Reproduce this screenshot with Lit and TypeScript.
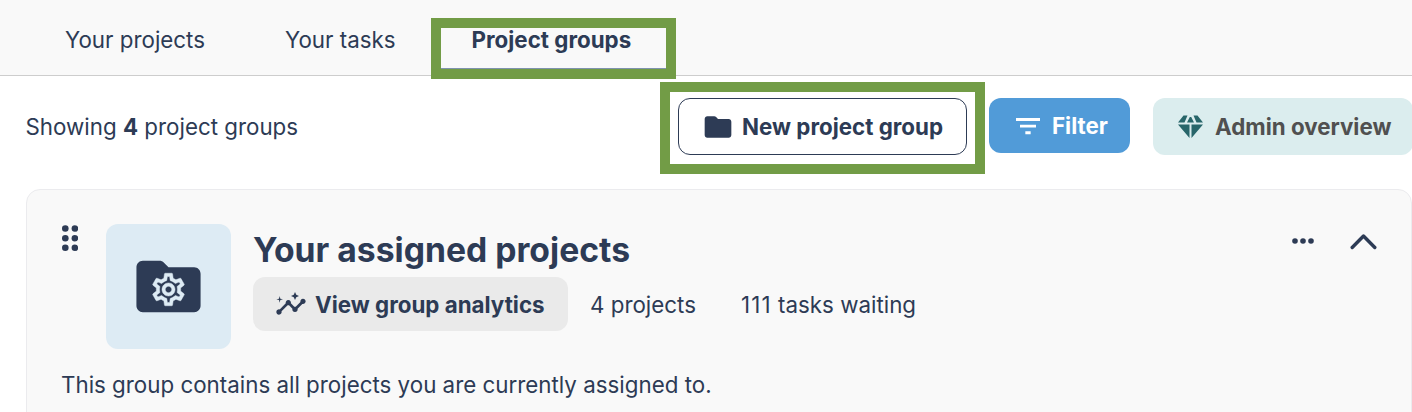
import { LitElement, html, css } from "lit";
import { customElement } from "lit/decorators.js";

const folder =
  "M10.59 4.59C10.21 4.21 9.7 4 9.17 4H4c-1.1 0-1.99.9-1.99 2L2 18c0 1.1.9 2 2 2h16c1.1 0 2-.9 2-2V8c0-1.1-.9-2-2-2h-8l-1.41-1.41z";
const gear =
  "M19.43 12.98c.04-.32.07-.64.07-.98 0-.34-.03-.66-.07-.98l2.11-1.65c.19-.15.24-.42.12-.64l-2-3.46c-.09-.16-.26-.25-.44-.25-.06 0-.12.01-.17.03l-2.49 1c-.52-.4-1.08-.73-1.69-.98l-.38-2.65C14.46 2.18 14.25 2 14 2h-4c-.25 0-.46.18-.49.42l-.38 2.65c-.61.25-1.17.59-1.69.98l-2.49-1c-.06-.02-.12-.03-.18-.03-.17 0-.34.09-.43.25l-2 3.46c-.13.22-.07.49.12.64l2.11 1.65c-.04.32-.07.65-.07.98 0 .33.03.66.07.98l-2.11 1.65c-.19.15-.24.42-.12.64l2 3.46c.09.16.26.25.44.25.06 0 .12-.01.17-.03l2.49-1c.52.4 1.08.73 1.69.98l.38 2.65c.03.24.24.42.49.42h4c.25 0 .46-.18.49-.42l.38-2.65c.61-.25 1.17-.59 1.69-.98l2.49 1c.06.02.12.03.18.03.17 0 .34-.09.43-.25l2-3.46c.12-.22.07-.49-.12-.64l-2.11-1.65zm-1.98-1.71c.04.31.05.52.05.73 0 .21-.02.43-.05.73l-.14 1.13.89.7 1.08.84-.7 1.21-1.27-.51-1.04-.42-.9.68c-.43.32-.84.56-1.25.73l-1.06.43-.16 1.13-.2 1.35h-1.4l-.19-1.35-.16-1.13-1.06-.43c-.43-.18-.83-.41-1.23-.71l-.91-.7-1.06.43-1.27.51-.7-1.21 1.08-.84.89-.7-.14-1.13c-.03-.31-.05-.54-.05-.74s.02-.43.05-.73l.14-1.13-.89-.7-1.08-.84.7-1.21 1.27.51 1.04.42.9-.68c.43-.32.84-.56 1.25-.73l1.06-.43.16-1.13.2-1.35h1.39l.19 1.35.16 1.13 1.06.43c.43.18.83.41 1.23.71l.91.7 1.06-.43 1.27-.51.7 1.21-1.07.85-.89.7.14 1.13zM12 8c-2.21 0-4 1.79-4 4s1.79 4 4 4 4-1.79 4-4-1.79-4-4-4zm0 6c-1.1 0-2-.9-2-2s.9-2 2-2 2 .9 2 2-.9 2-2 2z";
const insights =
  "M21 8c-1.45 0-2.26 1.44-1.93 2.51l-3.55 3.56c-.3-.09-.74-.09-1.04 0l-2.55-2.55C12.27 10.45 11.46 9 10 9c-1.45 0-2.27 1.44-1.93 2.52l-4.56 4.55C2.44 15.74 1 16.55 1 18c0 1.1.9 2 2 2 1.45 0 2.26-1.44 1.93-2.51l4.55-4.56c.3.09.74.09 1.04 0l2.55 2.55C12.73 16.55 13.54 18 15 18c1.45 0 2.27-1.44 1.93-2.52l3.56-3.55C21.56 12.26 23 11.45 23 10c0-1.1-.9-2-2-2zM15 9l.94-2.07L18 6l-2.06-.93L15 3l-.92 2.07L12 6l2.08.93zM3.5 11L4 9l2-.5L4 8l-.5-2L3 8l-2 .5L3 9z";

@customElement("app-root")
export class AppRoot extends LitElement {
  static styles = css`
    :host { display: block; position: relative; height: 412px; overflow: hidden; background: #fff;
      font-family: Inter, sans-serif; font-size: 22.35px; font-optical-sizing: none; line-height: 28px; color: #2d3b55; }
    * { box-sizing: border-box; }
    svg { display: block; flex: none; fill: currentColor; }
    .tabs { display: flex; height: 76px; background: #f9f9f9; border-bottom: 1px solid #cdcdcd; padding-left: 25px; }
    .tab { padding: 26px 40px 0; height: 69px; white-space: nowrap; }
    .tab.active { padding-left: 36px; font-weight: 700; border-bottom: 1px solid #7f93ae; }
    .bar { display: flex; align-items: flex-start; height: 113px; padding: 22px 0 0 25.5px; white-space: nowrap; margin-right: -1px; }
    .count { flex: 1; padding-top: 15px; }
    .btn { display: flex; align-items: center; flex: none; border-radius: 12px; font-weight: 700; white-space: nowrap; }
    .new { width: 289px; height: 57px; border: 1px solid #2d3b55; padding-left: 23px; gap: 8px; }
    .new span, .admin span, .meta span { padding-top: 1px; }
    .filter { width: 141px; height: 55px; margin-left: 22px; padding-left: 23px; gap: 8px; background: #519bd8; color: #fff; }
    .admin { width: 260px; height: 57px; margin-left: 23px; padding-left: 24px; gap: 11px; background: #dbedee; color: #505050; }
    .gem { color: #28666a; }
    .card { margin-left: 26px; height: 240px; background: #f9f9f9; border: 1px solid #ebebee; border-radius: 14px; padding: 34px 34px 0 35px; }
    .head { display: flex; height: 125px; }
    .tile { display: grid; place-items: center; width: 125px; height: 125px; margin-left: 28px; border-radius: 12px; background: #ddebf4; }
    .tile svg { grid-area: 1 / 1; }
    .cog { color: #ddebf4; margin-top: 6px; }
    .body { flex: 1; padding: 4px 0 0 22px; }
    .title { margin: 0; font-size: 33.7px; line-height: 44px; font-weight: 700; white-space: nowrap; }
    .meta { display: flex; align-items: center; margin-top: 5px; white-space: nowrap; }
    .analytics { width: 315px; height: 54px; padding-left: 22px; gap: 8px; background: #eaeaea; }
    .projects { margin-left: 22px; }
    .tasks { margin-left: 45px; }
    .tasks b { font-weight: 400; letter-spacing: 1.2px; }
    .actions { display: flex; gap: 36px; }
    .desc { margin: 22px 0 0 -1px; }
    .mark { position: absolute; border: 10px solid #729c46; }
    .mark-tab { left: 431px; top: 18px; width: 245px; height: 61px; }
    .mark-new { left: 660px; top: 82px; width: 325px; height: 92px; }
  `;

  render() {
    return html`
      <nav class="tabs">
        <div class="tab">Your projects</div>
        <div class="tab">Your tasks</div>
        <div class="tab active">Project groups</div>
      </nav>
      <div class="bar">
        <div class="count">Showing <b>4</b> project groups</div>
        <div class="btn new">
          <svg width="32" height="32" viewBox="0 0 24 24"><path d=${folder} /></svg>
          <span>New project group</span>
        </div>
        <div class="btn filter">
          <svg width="32" height="32" viewBox="0 0 24 24"><path d="M3 6h18v2.200H3zM6 11h12v2.200H6zM10 16h4v2.200h-4z" /></svg>
          <span>Filter</span>
        </div>
        <div class="btn admin">
          <svg class="gem" width="27" height="24" viewBox="0 0 27 24">
            <path d="M6.500 .500h4L7.500 7.500H1zM12.800 2h1.400L17 7.500h-7zM16.500 .500h4L26 7.500h-6.500zM1 9.500h11.500V23zM14.500 9.500H26L14.500 23z" />
          </svg>
          <span>Admin overview</span>
        </div>
      </div>
      <section class="card">
        <div class="head">
          <svg width="16" height="28" viewBox="0 0 16 28">
            <circle cx="3.300" cy="4.500" r="3.300" /><circle cx="12.900" cy="4.500" r="3.300" />
            <circle cx="3.300" cy="14.200" r="3.300" /><circle cx="12.900" cy="14.200" r="3.300" />
            <circle cx="3.300" cy="23.800" r="3.300" /><circle cx="12.900" cy="23.800" r="3.300" />
          </svg>
          <div class="tile">
            <svg width="77" height="77" viewBox="0 0 24 24"><path d=${folder} /></svg>
            <svg class="cog" width="39" height="39" viewBox="0 0 24 24"><path d=${gear} stroke="currentColor" stroke-width=".3" /></svg>
          </div>
          <div class="body">
            <h2 class="title">Your assigned projects</h2>
            <div class="meta">
              <div class="btn analytics">
                <svg width="32" height="32" viewBox="0 0 24 24"><path d=${insights} /></svg>
                <span>View group analytics</span>
              </div>
              <span class="projects">4 projects</span>
              <span class="tasks"><b>111</b> tasks waiting</span>
            </div>
          </div>
          <div class="actions">
            <svg width="22" height="34" viewBox="0 0 22 34">
              <circle cx="3" cy="17" r="2.800" /><circle cx="11" cy="17" r="2.800" /><circle cx="19" cy="17" r="2.800" />
            </svg>
            <svg width="27" height="34" viewBox="0 0 27 34">
              <path d="M2.200 23.500 13.500 12 24.800 23.500" fill="none" stroke="currentColor" stroke-width="3.400" stroke-linecap="round" stroke-linejoin="round" />
            </svg>
          </div>
        </div>
        <p class="desc">This group contains all projects you are currently assigned to.</p>
      </section>
      <div class="mark mark-tab"></div>
      <div class="mark mark-new"></div>
    `;
  }
}
